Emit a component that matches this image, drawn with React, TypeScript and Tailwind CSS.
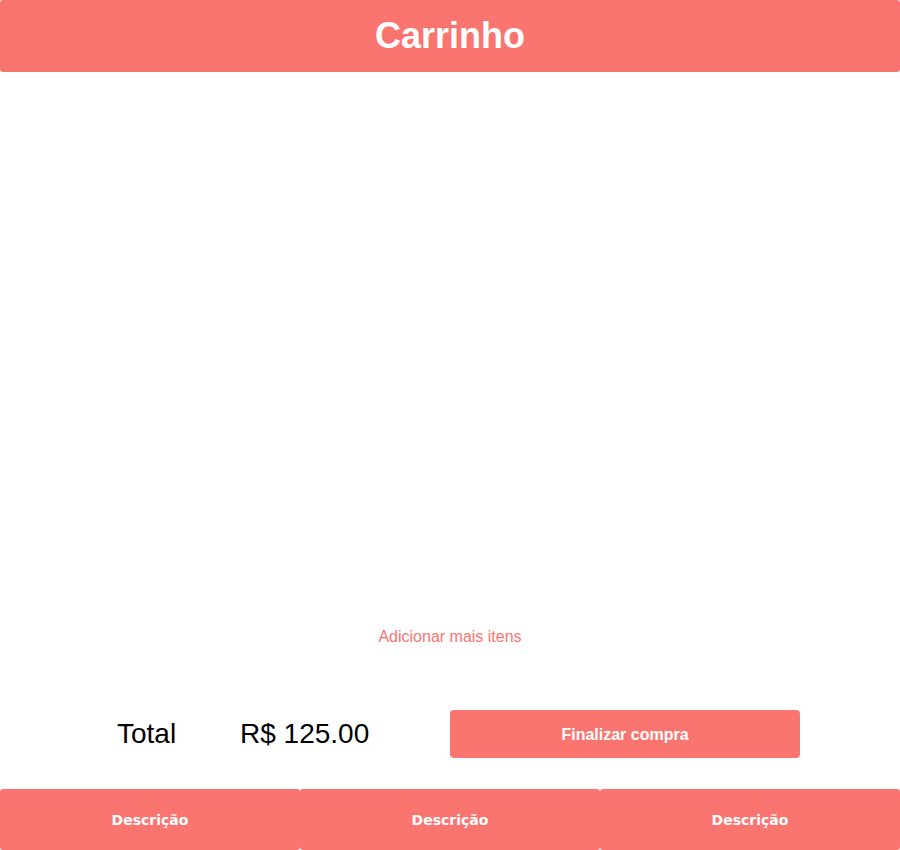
import React from "react";

const CORAL = "bg-[#fb7570]";

export default function App() {
  return (
    <div className="h-[850px] w-full flex flex-col bg-white font-['Liberation_Sans',Arial,sans-serif]">
      {/* Header */}
      <div className={`h-[72px] ${CORAL} rounded-[3px] flex items-center justify-center`}>
        <h1 className="text-white font-bold text-[36px] leading-none">Carrinho</h1>
      </div>

      {/* Empty cart area */}
      <div className="flex-1" />

      {/* Add more */}
      <div className="flex justify-center">
        <a className="text-[#fb7570] text-[16px] leading-[18px] cursor-pointer">Adicionar mais itens</a>
      </div>

      {/* Total row */}
      <div className="mt-[64px] h-[48px] flex items-center">
        <span className="ml-[117px] w-[123px] text-[28px] text-black">Total</span>
        <span className="text-[28px] text-black">R$ 125.00</span>
        <button className={`ml-auto mr-[100px] w-[350px] h-[48px] ${CORAL} rounded-[4px] text-white font-bold text-[16px] pt-[1px]`}>
          Finalizar compra
        </button>
      </div>

      {/* Bottom nav */}
      <div className="mt-[31px] h-[61px] flex">
        {["Descrição", "Descrição", "Descrição"].map((label, i) => (
          <button
            key={i}
            className={`flex-1 ${CORAL} rounded-[3px] text-white font-bold text-[14px] pt-[1px] font-['DejaVu_Sans',sans-serif]`}
          >
            {label}
          </button>
        ))}
      </div>
    </div>
  );
}
